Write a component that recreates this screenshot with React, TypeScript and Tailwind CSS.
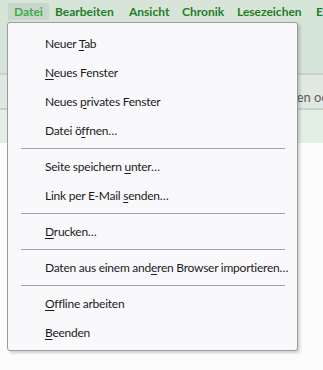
import { FC, ReactNode } from 'react';

interface Entry {
  pre: string;
  key: string;
  post: string;
}

type Row = Entry | 'sep';

const rows: Row[] = [
  { pre: 'Neuer ', key: 'T', post: 'ab' },
  { pre: '', key: 'N', post: 'eues Fenster' },
  { pre: 'Neues ', key: 'p', post: 'rivates Fenster' },
  { pre: 'Datei ö', key: 'f', post: 'fnen…' },
  'sep',
  { pre: 'Seite speichern ', key: 'u', post: 'nter…' },
  { pre: 'Link per E-Mail ', key: 's', post: 'enden…' },
  'sep',
  { pre: '', key: 'D', post: 'rucken…' },
  'sep',
  { pre: 'Daten aus einem and', key: 'e', post: 'ren Browser importieren…' },
  'sep',
  { pre: '', key: 'O', post: 'ffline arbeiten' },
  { pre: '', key: 'B', post: 'eenden' },
];

const bar: { label: string; w: string; active?: boolean }[] = [
  { label: 'Datei', w: 'w-[41px]', active: true },
  { label: 'Bearbeiten', w: 'w-[74px]' },
  { label: 'Ansicht', w: 'w-[53px]' },
  { label: 'Chronik', w: 'w-[55px]' },
  { label: 'Lesezeichen', w: 'w-[79px]' },
  { label: 'Extras', w: 'w-[50px]' },
];

const MenuItem: FC<{ entry: Entry }> = ({ entry }) => (
  <div className="h-[29px] flex items-center pl-[37px] text-[12px] tracking-[-0.25px] text-[#1b1b1b]">
    <span className="whitespace-pre">
      {entry.pre}
      <span className="underline underline-offset-2">{entry.key}</span>
      {entry.post}
    </span>
  </div>
);

const Sep: FC = () => (
  <div className="h-[7px] flex items-center pl-[13px] pr-[12px]">
    <div className="h-px w-full bg-[#a3a3a3]" />
  </div>
);

const Band: FC<{ children?: ReactNode; className: string }> = ({ children, className }) => (
  <div className={className}>{children}</div>
);

const App: FC = () => {
  return (
    <div className="relative w-[323px] h-[370px] overflow-hidden bg-[#fcfcfc] font-['Lato',sans-serif]">
      {/* menu bar */}
      <div className="flex h-[20px] bg-[#d6e5d8] pl-[8px] overflow-hidden">
        {bar.map((b) => (
          <div
            key={b.label}
            className={`${b.w} shrink-0 h-[17px] mt-[3px] pl-[6px] text-[12px] font-bold leading-[17px] whitespace-nowrap ${
              b.active ? 'bg-[#c9d6cb] text-[#38ad47]' : 'text-[#1e7d27]'
            }`}
          >
            {b.label}
          </div>
        ))}
      </div>

      {/* page below the bar */}
      <div className="flex h-[350px]">
        <div className="w-[7px] bg-[#c8d5f1]" />
        <div className="flex-1 flex flex-col">
          <Band className="h-[53px] bg-[#d5e4d8]" />
          <Band className="h-[37px] bg-[#dfe8e2] border-y-2 border-[#c6d3c9] pt-[14px] overflow-hidden">
            <div className="ml-[269px] text-[13px] leading-[16px] text-[#5b5f5c] whitespace-nowrap">Suchen oder Adresse eingeben</div>
          </Band>
          <Band className="h-[33px] bg-[#e3efe5]" />
          <Band className="flex-1 bg-[#fcfcfc]" />
        </div>
      </div>

      {/* dropdown */}
      <div className="absolute left-[7px] top-[22px] w-[291px] h-[329px] rounded-[3px] border border-[#9c9c9c] bg-[#f9f9fb] shadow-[2px_2px_3px_rgba(0,0,0,0.18)] pt-[6px]">
        {rows.map((r, i) => (r === 'sep' ? <Sep key={i} /> : <MenuItem key={i} entry={r} />))}
      </div>
    </div>
  );
};

export default App;
